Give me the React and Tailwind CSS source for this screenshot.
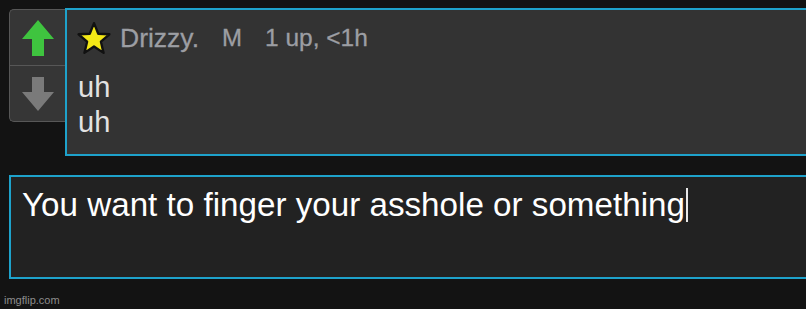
import React from 'react';

const font = { fontFamily: '"Liberation Sans", Arial, sans-serif' };

const Star = () => (
  <svg width="34" height="34" viewBox="0 0 32 32">
    <polygon
      points="16,2 20,12 30.5,12.5 22.5,19.5 25,30 16,24 7,30 9.5,19.5 1.5,12.5 12,12"
      fill="#f4e816"
      stroke="#111"
      strokeWidth="2.2"
      strokeLinejoin="round"
    />
  </svg>
);

const VoteBox = () => (
  <div className="w-[56px] h-[113px] shrink-0 flex flex-col bg-[#363636] border border-[#575757] border-r-0 rounded-l-[5px]">
    {/* upvote */}
    <div className="h-[56px] flex items-center justify-center border-b border-[#575757]">
      <svg width="32" height="36" viewBox="0 0 32 36">
        <polygon points="16,0 32,19 22,19 22,36 10,36 10,19 0,19" fill="#3fc43f" />
      </svg>
    </div>
    {/* downvote */}
    <div className="flex-1 flex items-center justify-center">
      <svg width="32" height="34" viewBox="0 0 32 34">
        <polygon points="10,0 22,0 22,15 32,15 16,34 0,15 10,15" fill="#7a7a7a" />
      </svg>
    </div>
  </div>
);

export default function App() {
  return (
    <div className="relative w-[806px] h-[309px] overflow-hidden bg-[#131313]" style={font}>
      {/* Comment row */}
      <div className="flex items-start pl-[9px] pt-[9px]">
        <VoteBox />
        <div className="-mt-[1px] w-[760px] h-[148px] shrink-0 bg-[#333333] border-2 border-[#1ea2cb] pl-[10px]">
          <div className="flex items-center h-[28px] mt-[14px] text-[#9c9ea3] [-webkit-text-stroke:0.3px_#9c9ea3]">
            <Star />
            <span className="ml-[9px] text-[26.5px] leading-[28px]">Drizzy.</span>
            <span className="ml-[23px] text-[24px] leading-[28px]">M</span>
            <span className="ml-[23px] text-[24.5px] leading-[28px]">1 up, &lt;1h</span>
          </div>
          <div className="mt-[18px] pl-[1px] text-[29px] leading-[35px] text-[#e2e2e2]">
            <div>uh</div>
            <div>uh</div>
          </div>
        </div>
      </div>

      {/* Reply input */}
      <div className="ml-[9px] mt-[19px] w-[820px] h-[104px] bg-[#222222] border-2 border-[#1ea2cb] pl-[11px] pt-[9px]">
        <div className="flex items-center text-[33.2px] leading-[38px] text-white">
          <span>You want to finger your asshole or something</span>
          <span className="inline-block w-[2px] h-[34px] bg-[#e8e8e8] ml-[1px]" />
        </div>
      </div>

      <div className="absolute left-[4px] top-[293px] text-[11px] leading-[14px] text-[#8c8c8c]">
        imgflip.com
      </div>
    </div>
  );
}
